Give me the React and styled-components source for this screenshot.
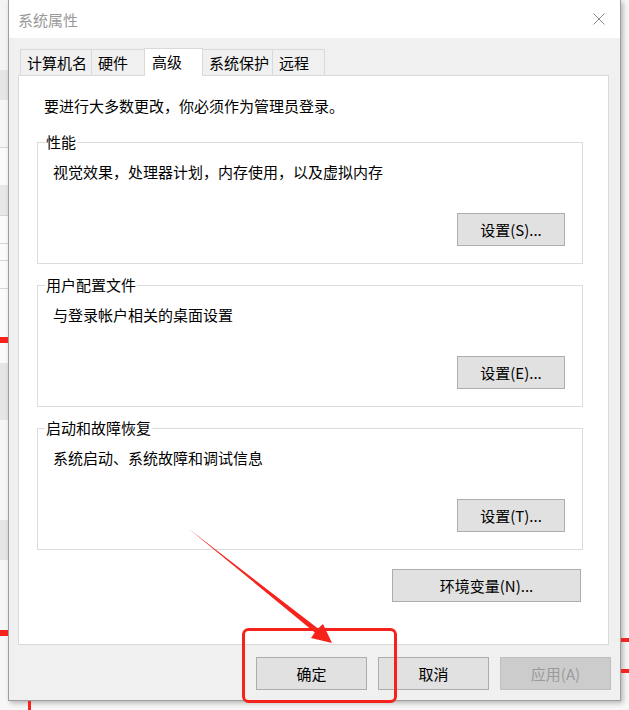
import React from 'react'
import styled, { createGlobalStyle } from 'styled-components';

const GlobalStyle = createGlobalStyle`
  html, body {
    margin: 0;
    padding: 0;
  }
  body {
    font-family: "Noto Sans CJK SC", "Noto Sans", sans-serif;
    font-size: 15px;
    color: #000;
  }
`;

// backdrop behind the dialog: a list view cut off at the left edge
const Page = styled.div`
  position: relative;
  width: 629px;
  height: 710px;
  overflow: hidden;
  background:
    linear-gradient(#f4f4f4 0 70px, #e6e6e6 70px 100px, #f7f7f7 100px 147px, #d6d6d6 147px 148px,
      #fbfbfb 148px 185px, #e8e8e8 185px 215px, #d6d6d6 215px 216px, #fbfbfb 216px 243px,
      #d6d6d6 243px 244px, #fbfbfb 244px 260px, #d6d6d6 260px 261px, #fbfbfb 261px 288px,
      #d6d6d6 288px 289px, #fbfbfb 289px 363px, #e6e6e6 363px 420px, #f7f7f7 420px 520px,
      #e6e6e6 520px 560px, #f7f7f7 560px 710px) left top / 8px 710px no-repeat,
    #f7f7f7;
`;

const Window = styled.div`
  margin-left: 8px;
  width: 613px;
  height: 701px;
  box-sizing: border-box;
  display: flex;
  flex-direction: column;
  border: 1px solid #9e9e9e;
  border-top: none;
  box-shadow: 2px 2px 5px rgba(0, 0, 0, 0.28);
  background: #f0f0f0;
`;

const TitleBar = styled.div`
  height: 38px;
  flex: none;
  display: flex;
  align-items: center;
  justify-content: space-between;
  padding: 0 15px 0 9px;
  background: #fff;
`;

const Title = styled.span`
  line-height: 20px;
  color: #999;
  margin-top: 2px;
`;

const Body = styled.div`
  flex: 1;
  display: flex;
  flex-direction: column;
  padding: 10px 9px 0 9px;
`;

const TabStrip = styled.div`
  height: 27px;
  display: flex;
  align-items: flex-end;
  padding-left: 2px;
`;

const Tab = styled.div`
  position: relative;
  box-sizing: border-box;
  width: ${p => p.$w}px;
  height: ${p => (p.$active ? 28 : 26)}px;
  margin-bottom: ${p => (p.$active ? -1 : 0)}px;
  margin-left: -1px;
  z-index: ${p => (p.$active ? 1 : 0)};
  display: flex;
  align-items: center;
  padding: 0 0 ${p => (p.$active ? 2 : 0)}px ${p => (p.$active ? 7 : 6)}px;
  border: 1px solid #d9d9d9;
  border-bottom: none;
  background: ${p => (p.$active ? '#fff' : '#f0f0f0')};
  line-height: 20px;
  &:first-child {
    margin-left: 0;
  }
`;

const Pane = styled.div`
  height: 570px;
  box-sizing: border-box;
  margin-right: 2px;
  display: flex;
  flex-direction: column;
  padding: 20px 25px 0 18px;
  border: 1px solid #d9d9d9;
  background: #fff;
`;

const Intro = styled.div`
  line-height: 20px;
  margin-left: 7px;
`;

const Group = styled.fieldset`
  margin: ${p => p.$first ? 16 : 11}px 0 0 0;
  min-width: 0;
  padding: 10px 17px 17px 15px;
  border: 1px solid #dcdcdc;
  display: flex;
  flex-direction: column;
`;

const Legend = styled.legend`
  margin-left: -8px;
  padding: 0 1px;
  line-height: 20px;
`;

const Desc = styled.div`
  line-height: 20px;
`;

const ButtonRow = styled.div`
  display: flex;
  justify-content: flex-end;
  margin-top: ${p => p.$gap || 0}px;
  margin-right: ${p => p.$right || 0}px;
`;

const Button = styled.button`
  box-sizing: border-box;
  width: ${p => p.$w}px;
  height: 33px;
  padding: 0;
  border: 1px solid ${p => (p.disabled ? '#bfbfbf' : '#adadad')};
  background: ${p => (p.disabled ? '#cccccc' : '#e1e1e1')};
  color: ${p => (p.disabled ? '#9a9a9a' : '#000')};
  font-family: inherit;
  font-size: 15px;
  line-height: 20px;
`;

const Footer = styled.div`
  display: flex;
  justify-content: flex-end;
  gap: 11px;
  margin-top: 12px;
`;

const Overlay = styled.svg`
  position: absolute;
  left: 0;
  top: 0;
  pointer-events: none;
`;

const CloseIcon = () => (
  <svg width="12" height="12" viewBox="0 0 12 12">
    <path d="M0.5 0.5 L11.5 11.5 M11.5 0.5 L0.5 11.5" stroke="#8a8a8a" strokeWidth="1" fill="none" />
  </svg>
);

const tabs = [
  { label: '计算机名', w: 72 },
  { label: '硬件', w: 54 },
  { label: '高级', w: 59, active: true },
  { label: '系统保护', w: 71 },
  { label: '远程', w: 53 },
];

const groups = [
  { title: '性能', desc: '视觉效果，处理器计划，内存使用，以及虚拟内存', button: '设置(S)...' },
  { title: '用户配置文件', desc: '与登录帐户相关的桌面设置', button: '设置(E)...' },
  { title: '启动和故障恢复', desc: '系统启动、系统故障和调试信息', button: '设置(T)...' },
];

export default function App() {
  return (
    <Page>
      <GlobalStyle />
      <Window>
        <TitleBar>
          <Title>系统属性</Title>
          <CloseIcon />
        </TitleBar>
        <Body>
          <TabStrip>
            {tabs.map(t => (
              <Tab key={t.label} $w={t.w} $active={t.active}>{t.label}</Tab>
            ))}
          </TabStrip>
          <Pane>
            <Intro>要进行大多数更改，你必须作为管理员登录。</Intro>
            {groups.map((g, i) => (
              <Group key={g.title} $first={i === 0}>
                <Legend>{g.title}</Legend>
                <Desc>{g.desc}</Desc>
                <ButtonRow $gap={31}>
                  <Button $w={108}>{g.button}</Button>
                </ButtonRow>
              </Group>
            ))}
            <ButtonRow $gap={19} $right={2}>
              <Button $w={189}>环境变量(N)...</Button>
            </ButtonRow>
          </Pane>
          <Footer>
            <Button $w={111}>确定</Button>
            <Button $w={111}>取消</Button>
            <Button $w={111} disabled>应用(A)</Button>
          </Footer>
        </Body>
      </Window>
      {/* red annotation marks drawn over the screenshot */}
      <Overlay width="629" height="710" viewBox="0 0 629 710">
        <rect x="0" y="337" width="8" height="6" fill="#f5231b" />
        <rect x="0" y="630" width="8" height="6" fill="#f5231b" />
        <rect x="621" y="638" width="8" height="4" fill="#f5231b" />
        <rect x="621" y="669" width="8" height="4" fill="#f5231b" />
        <rect x="28" y="701" width="3" height="9" fill="#f5231b" />
        <rect x="243.5" y="629.5" width="152" height="72" rx="5" fill="none" stroke="#f5231b" strokeWidth="3" />
        <polygon
          points="189,529 318,628.5 323,624 332,643 311,638 314.8,632.5"
          fill="#f5231b"
        />
      </Overlay>
    </Page>
  );
}
